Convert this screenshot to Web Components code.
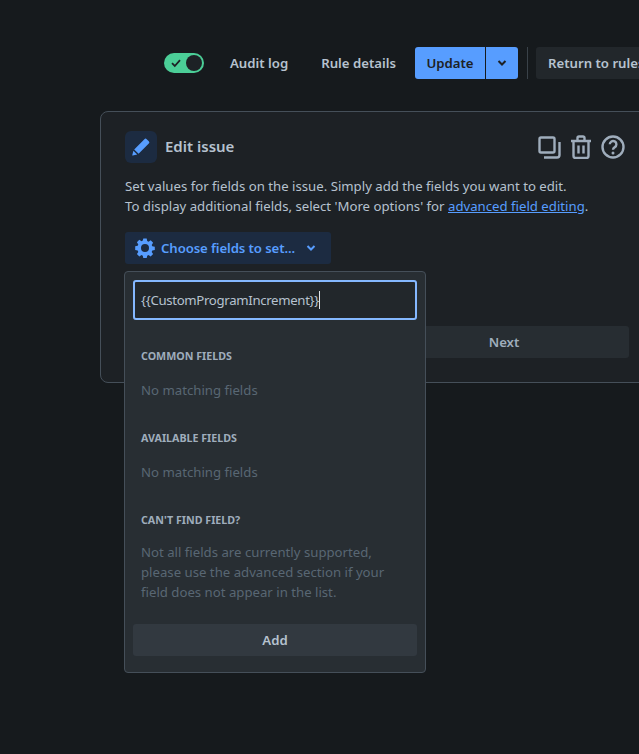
<!DOCTYPE html>
<html>
<head>
<meta charset="utf-8">
<title>Edit issue</title>
<style>
  html, body { margin: 0; height: 100%; overflow: hidden; background: #161a1d; }
  body { font-family: "Noto Sans", "Open Sans", sans-serif; font-size: 13.2px; color: #b6c2cf; }
</style>
</head>
<body>
<rule-page>
  <rule-toolbar></rule-toolbar>
  <edit-issue-card></edit-issue-card>
</rule-page>

<script>
const pageTemplate = document.createElement('template');
pageTemplate.innerHTML = `
  <style>
    :host { display: block; width: 639px; height: 754px; overflow: hidden; }
    .content { display: flex; flex-direction: column; gap: 32px; padding: 47px 0 0 100px; width: 560px; }
  </style>
  <div class="content"><slot></slot></div>
`;

class RulePage extends HTMLElement {
  constructor() {
    super();
    this.attachShadow({ mode: 'open' });
    this.shadowRoot.appendChild(pageTemplate.content.cloneNode(true));
  }
}

const toolbarTemplate = document.createElement('template');
toolbarTemplate.innerHTML = `
  <style>
    :host { display: flex; align-items: center; height: 32px; margin-left: 64px; white-space: nowrap; font-weight: 600; width: 520px; }
    .toggle { width: 40px; height: 20px; border-radius: 10px; background: #4bce97; display: flex; align-items: center; justify-content: space-between; padding: 0 2px 0 6px; box-sizing: border-box; margin-right: 18px; flex: none; }
    .knob { width: 16px; height: 16px; border-radius: 50%; background: #1d2125; }
    .link { padding: 0 8px; margin-right: 17px; color: #b6c2cf; flex: none; }
    .link.last { margin-right: 11px; }
    .update { display: flex; height: 32px; flex: none; }
    .update div { background: #579dff; color: #1d2125; display: flex; align-items: center; justify-content: center; }
    .update .main { width: 70px; border-radius: 3px 0 0 3px; }
    .update .more { width: 32px; margin-left: 1px; border-radius: 0 3px 3px 0; }
    .sep { width: 1px; height: 32px; background: #3a4249; margin: 0 8px 0 9px; flex: none; }
    .back { height: 32px; padding: 0 12px; line-height: 32px; background: #22272b; border-radius: 3px; color: #b6c2cf; flex: none; }
  </style>
  <div class="toggle">
    <svg width="12" height="12" viewBox="0 0 12 12"><path d="M2 6.200 4.800 9 10 3.200" fill="none" stroke="#1d2125" stroke-width="1.800"/></svg>
    <div class="knob"></div>
  </div>
  <span class="link">Audit log</span>
  <span class="link last">Rule details</span>
  <div class="update">
    <div class="main">Update</div>
    <div class="more"><svg width="12" height="12" viewBox="0 0 12 12"><path d="M2.500 4 6 7.500 9.500 4" fill="none" stroke="#1d2125" stroke-width="2"/></svg></div>
  </div>
  <div class="sep"></div>
  <span class="back">Return to rules</span>
`;

class RuleToolbar extends HTMLElement {
  constructor() {
    super();
    this.attachShadow({ mode: 'open' });
    this.shadowRoot.appendChild(toolbarTemplate.content.cloneNode(true));
  }
}

const cardTemplate = document.createElement('template');
cardTemplate.innerHTML = `
  <style>
    :host { display: block; position: relative; width: 553px; height: 272px; box-sizing: border-box; padding: 19px 24px 0; background: #1d2125; border: 1px solid #454f59; border-radius: 8px; }
    header { display: flex; align-items: center; height: 32px; }
    .badge { width: 32px; height: 32px; border-radius: 6px; background: #1c2b41; display: flex; align-items: center; justify-content: center; margin-right: 8px; }
    h2 { margin: -2px 0 0; font-size: 15px; font-weight: 600; color: #b6c2cf; flex: 1; line-height: 20px; }
    .actions { display: flex; gap: 8px; margin-right: 3px; }
    p { margin: 13px 0 0; line-height: 20px; color: #b6c2cf; white-space: nowrap; }
    a { color: #579dff; text-decoration: underline; }
    .choose { display: flex; align-items: center; height: 32px; margin-top: 16px; padding-left: 10px; width: 206px; box-sizing: border-box; background: #1c2b41; color: #579dff; font-weight: 600; border-radius: 3px; white-space: nowrap; }
    .choose svg { flex: none; }
    .choose span { margin: 0 10px 0 6px; letter-spacing: -.1px; }
    .next { position: absolute; left: 278px; top: 214px; width: 250px; height: 32px; background: #272d32; border-radius: 3px; text-align: center; line-height: 32px; font-weight: 600; color: #9fadbc; }
    field-picker { position: absolute; left: 23px; top: 159px; }
  </style>
  <header>
    <div class="badge">
      <svg width="20" height="20" viewBox="0 0 20 20"><path d="M13.400 2.200a1.600 1.600 0 0 1 2.300 0l2.100 2.100a1.600 1.600 0 0 1 0 2.300L7.600 16.800 3.200 12.400ZM2.400 13.800l3.800 3.800-4.400 1a.4.4 0 0 1-.5-.5Z" fill="#579dff"/></svg>
    </div>
    <h2>Edit issue</h2>
    <div class="actions">
      <svg width="24" height="24" viewBox="0 0 24 24" fill="none" stroke="#9fadbc" stroke-width="2.400"><rect x="2.500" y="2.500" width="15" height="15" rx="1.500"/><path d="M22.500 7v13a2.500 2.500 0 0 1-2.500 2.500H7"/></svg>
      <svg width="24" height="24" viewBox="0 0 24 24" fill="none" stroke="#9fadbc" stroke-width="2.400"><path d="M2 6h20M8.500 6V3a1.500 1.500 0 0 1 1.500-1.500h4A1.500 1.500 0 0 1 15.500 3v3M4.500 6v15a2 2 0 0 0 2 2h11a2 2 0 0 0 2-2V6M9.500 10.500v8M14.500 10.500v8"/></svg>
      <svg width="24" height="24" viewBox="0 0 24 24" fill="none" stroke="#9fadbc" stroke-width="2.400"><circle cx="12" cy="12" r="10.500"/><path d="M8.800 9.300a3.300 3.300 0 1 1 5 2.800c-1.200.7-1.800 1.300-1.800 2.700"/><circle cx="12" cy="18" r="1.500" fill="#9fadbc" stroke="none"/></svg>
    </div>
  </header>
  <p>Set values for fields on the issue. Simply add the fields you want to edit.<br>To display additional fields, select 'More options' for <a>advanced field editing</a>.</p>
  <div class="choose">
    <svg width="20" height="20" viewBox="0 0 20 20"><path fill="#579dff" fill-rule="evenodd" d="M8.300.6h3.400l.5 2.500 1.300.6 2.200-1.400 2.400 2.400-1.400 2.200.6 1.300 2.500.5v3.400l-2.500.5-.6 1.300 1.400 2.200-2.400 2.400-2.200-1.400-1.300.6-.5 2.500H8.300l-.5-2.500-1.300-.6-2.200 1.400-2.400-2.400 1.400-2.200-.6-1.300-2.500-.5V8.200l2.500-.5.6-1.300-1.400-2.200 2.400-2.400 2.200 1.400 1.300-.6ZM10 6a4 4 0 1 0 0 8 4 4 0 0 0 0-8Z"/></svg>
    <span>Choose fields to set...</span>
    <svg width="12" height="12" viewBox="0 0 12 12"><path d="M2.500 4 6 7.500 9.500 4" fill="none" stroke="#579dff" stroke-width="2"/></svg>
  </div>
  <div class="next">Next</div>
  <field-picker></field-picker>
`;

class EditIssueCard extends HTMLElement {
  constructor() {
    super();
    this.attachShadow({ mode: 'open' });
    this.shadowRoot.appendChild(cardTemplate.content.cloneNode(true));
  }
}

const pickerTemplate = document.createElement('template');
pickerTemplate.innerHTML = `
  <style>
    :host { display: block; width: 302px; height: 402px; box-sizing: border-box; padding: 8px; background: #282e33; border: 1px solid #454f59; border-radius: 4px; }
    .search { height: 40px; box-sizing: border-box; border: 2px solid #85b8ff; border-radius: 3px; background: #22272b; padding: 0 6px; display: flex; align-items: center; color: #b6c2cf; white-space: nowrap; letter-spacing: -.32px; }
    .caret { width: 1px; height: 18px; background: #dee4ea; }
    h3 { margin: 0 8px; font-size: 10.700px; font-weight: 700; line-height: 16px; color: #9fadbc; text-transform: uppercase; }
    .note { margin: 16px 8px 0; line-height: 20px; color: #596773; }
    section { margin-top: 28px; }
    section + section { margin-top: 30px; }
    section:last-of-type .note { margin-top: 14px; }
    .add { height: 32px; margin-top: 22px; background: #323940; border-radius: 3px; text-align: center; line-height: 32px; font-weight: 600; color: #b6c2cf; }
  </style>
  <div class="search">{{CustomProgramIncrement}}<span class="caret"></span></div>
  <section><h3>Common fields</h3><div class="note">No matching fields</div></section>
  <section><h3>Available fields</h3><div class="note">No matching fields</div></section>
  <section><h3>Can't find field?</h3><div class="note">Not all fields are currently supported,<br>please use the advanced section if your<br>field does not appear in the list.</div></section>
  <div class="add">Add</div>
`;

class FieldPicker extends HTMLElement {
  constructor() {
    super();
    this.attachShadow({ mode: 'open' });
    this.shadowRoot.appendChild(pickerTemplate.content.cloneNode(true));
  }
}

customElements.define('rule-page', RulePage);
customElements.define('rule-toolbar', RuleToolbar);
customElements.define('edit-issue-card', EditIssueCard);
customElements.define('field-picker', FieldPicker);
</script>
</body>
</html>
